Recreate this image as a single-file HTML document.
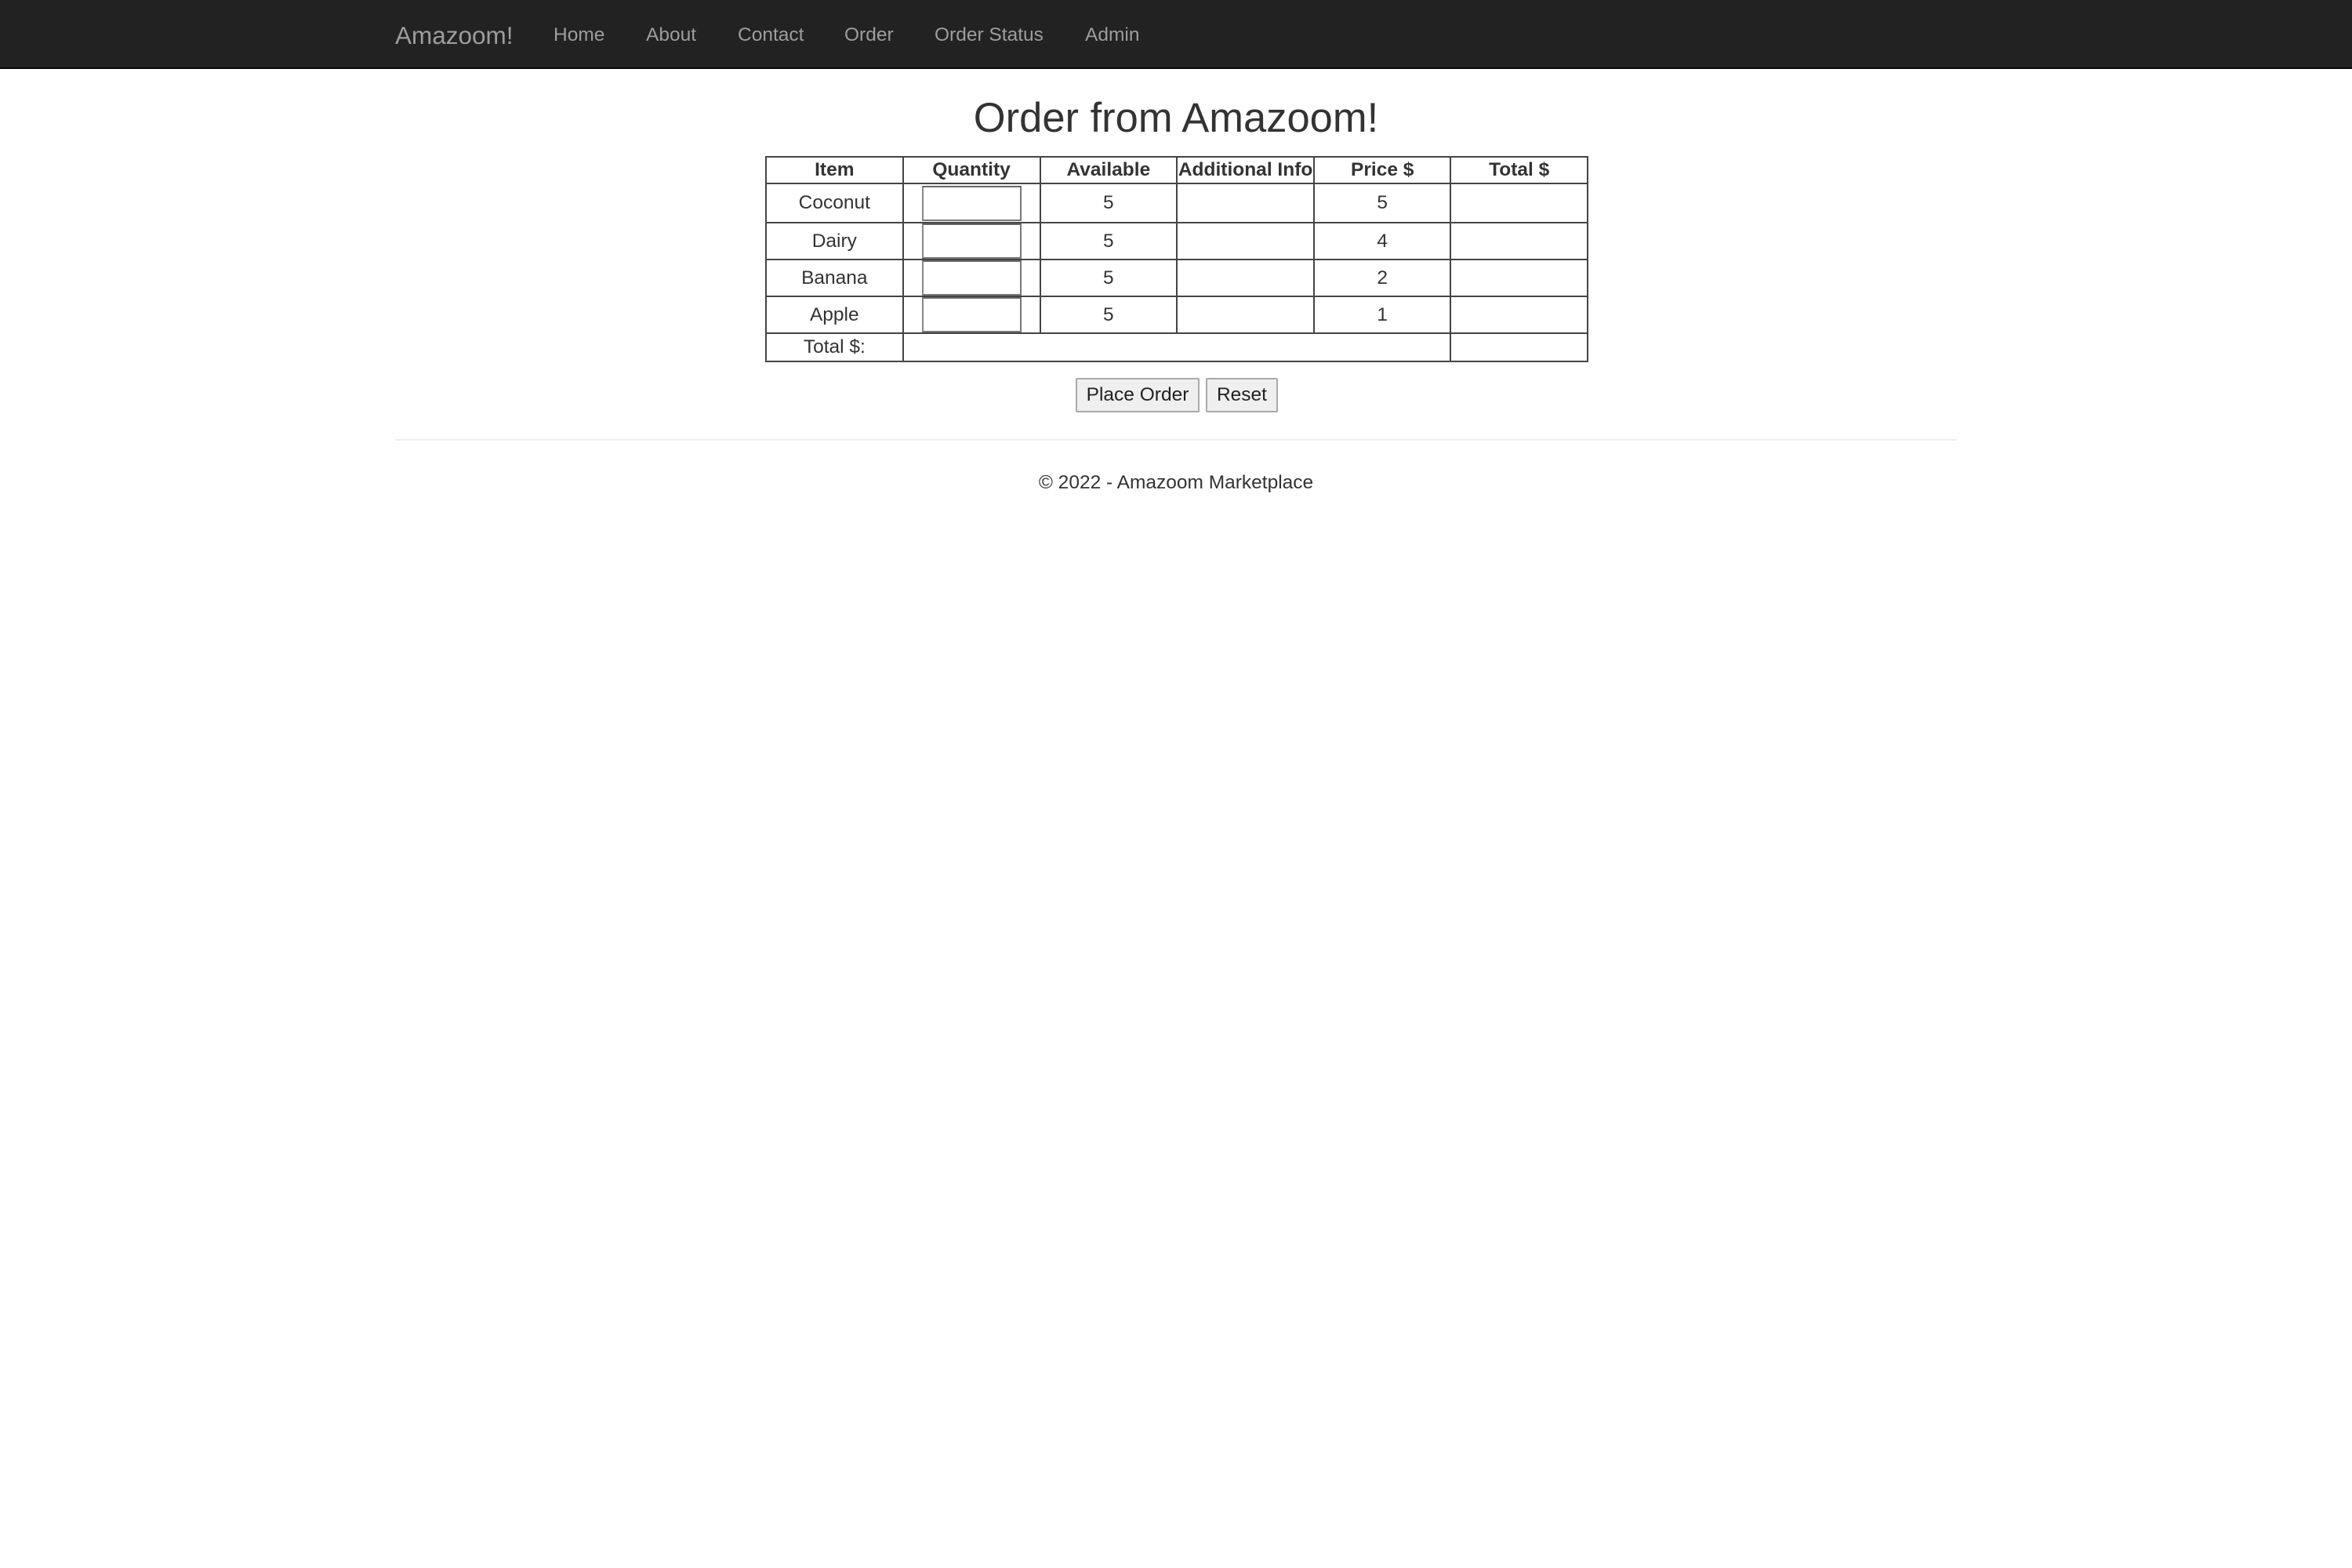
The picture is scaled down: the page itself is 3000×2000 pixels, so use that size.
<!DOCTYPE html>
<html><head><meta charset="utf-8"><style>
*{box-sizing:border-box}
body{margin:0;width:3000px;height:2000px;background:#fff;font-family:"Liberation Sans",Arial,sans-serif;color:#333;font-size:24.5px;position:relative;overflow:hidden}
.nav{position:absolute;left:0;top:0;width:3000px;height:88px;background:#222;border-bottom:2px solid #080808}
.nav span{position:absolute;top:2px;line-height:86px;color:#9d9d9d;font-size:24.5px;white-space:nowrap}
.nav .brand{font-size:31.5px}
h1{position:absolute;left:0;width:3000px;top:118px;margin:0;text-align:center;font-weight:normal;font-size:52.5px;line-height:66px}
table{position:absolute;left:976px;top:199px;width:1050px;border-collapse:collapse;font-size:24.5px}
td,th{border:2px solid #444;padding:0;text-align:center;width:175px;line-height:28px}
th{height:34px;font-weight:bold}
td{height:47px}
tr.r1 td{height:50px}
tr.tot td{height:36px;line-height:30px}
.inp{display:block;width:127px;height:45px;margin:0 0 0 23px;border:2px solid #777;border-top-color:#666;border-left-color:#888;background:#fff}
.btn{position:absolute;top:482px;height:44px;background:#efefef;border:2px solid #aaa;border-radius:2px;font-size:24.5px;line-height:40px;text-align:center;color:#222}
hr{position:absolute;left:504px;width:1992px;top:560px;margin:0;border:0;border-top:2px solid #eee}
.foot{position:absolute;left:0;width:3000px;top:598px;text-align:center;line-height:36px}
</style></head><body>
<div class="nav">
<span class="brand" style="left:504px">Amazoom!</span>
<span style="left:706px">Home</span>
<span style="left:824px">About</span>
<span style="left:941px">Contact</span>
<span style="left:1077px">Order</span>
<span style="left:1192px">Order Status</span>
<span style="left:1384px">Admin</span>
</div>
<h1>Order from Amazoom!</h1>
<table>
<tr><th>Item</th><th>Quantity</th><th>Available</th><th>Additional Info</th><th>Price $</th><th>Total $</th></tr>
<tr class="r1"><td>Coconut</td><td><span class="inp"></span></td><td>5</td><td></td><td>5</td><td></td></tr>
<tr><td>Dairy</td><td><span class="inp"></span></td><td>5</td><td></td><td>4</td><td></td></tr>
<tr><td>Banana</td><td><span class="inp"></span></td><td>5</td><td></td><td>2</td><td></td></tr>
<tr><td>Apple</td><td><span class="inp"></span></td><td>5</td><td></td><td>1</td><td></td></tr>
<tr class="tot"><td>Total $:</td><td colspan="4" style="width:700px"></td><td></td></tr>
</table>
<div class="btn" style="left:1372px;width:158px">Place Order</div>
<div class="btn" style="left:1538px;width:92px">Reset</div>
<hr>
<div class="foot">© 2022 - Amazoom Marketplace</div>
</body></html>
